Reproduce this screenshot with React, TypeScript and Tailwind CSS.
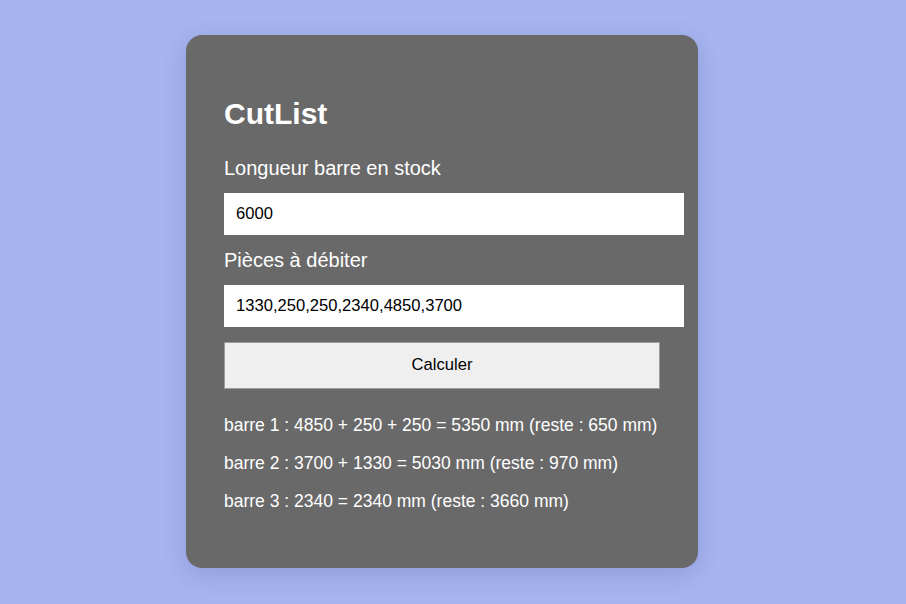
import React, { useState } from 'react';

interface Bar {
  pieces: number[];
  total: number;
  rest: number;
}

// first fit decreasing
const computeBars = (stock: number, pieces: number[]): Bar[] => {
  const sorted = [...pieces].sort((a, b) => b - a);
  const bars: Bar[] = [];
  sorted.forEach((p) => {
    const bar = bars.find((b) => b.rest >= p);
    if (bar) {
      bar.pieces.push(p);
      bar.total += p;
      bar.rest -= p;
    } else {
      bars.push({ pieces: [p], total: p, rest: stock - p });
    }
  });
  return bars;
};

const App: React.FC = () => {
  const [stock, setStock] = useState('6000');
  const [pieces, setPieces] = useState('1330,250,250,2340,4850,3700');
  const [bars, setBars] = useState<Bar[]>(() =>
    computeBars(6000, [1330, 250, 250, 2340, 4850, 3700])
  );

  const handleCalc = () => {
    const s = Number(stock);
    const list = pieces
      .split(',')
      .map((v) => Number(v.trim()))
      .filter((v) => v > 0 && v <= s);
    setBars(computeBars(s, list));
  };

  return (
    <div
      className="min-h-[604px] w-full bg-[#a6b4ef] pt-[35px] pl-[186px]"
      style={{ fontFamily: '"Liberation Sans", Arial, sans-serif' }}
    >
      <div className="w-[512px] h-[533px] rounded-[16px] bg-[#696969] px-[38px] pt-[62px] text-white shadow-[0_6px_24px_rgba(40,50,120,0.18)]">
        <h1 className="text-[30px] leading-[34px] font-bold">CutList</h1>

        <label className="block mt-[25px] text-[20px] leading-[24px]">Longueur barre en stock</label>
        <input
          value={stock}
          onChange={(e) => setStock(e.target.value)}
          className="mt-[13px] block w-[460px] h-[42px] bg-white px-[12px] text-[16.6px] text-black outline-none"
        />

        <label className="block mt-[13px] text-[20px] leading-[24px]">Pièces à débiter</label>
        <input
          value={pieces}
          onChange={(e) => setPieces(e.target.value)}
          className="mt-[13px] block w-[460px] h-[42px] bg-white px-[12px] text-[16.6px] text-black outline-none"
        />

        <button
          onClick={handleCalc}
          className="mt-[15px] block w-[436px] h-[47px] bg-[#efefef] border border-[#9c9c9c] text-[16.6px] text-black"
        >
          Calculer
        </button>

        <div className="mt-[26px] flex flex-col gap-[17px]">
          {bars.map((b, i) => (
            <p key={i} className="text-[17.5px] leading-[21px]">
              barre {i + 1} : {b.pieces.join(' + ')} = {b.total} mm (reste : {b.rest} mm)
            </p>
          ))}
        </div>
      </div>
    </div>
  );
};

export default App;
